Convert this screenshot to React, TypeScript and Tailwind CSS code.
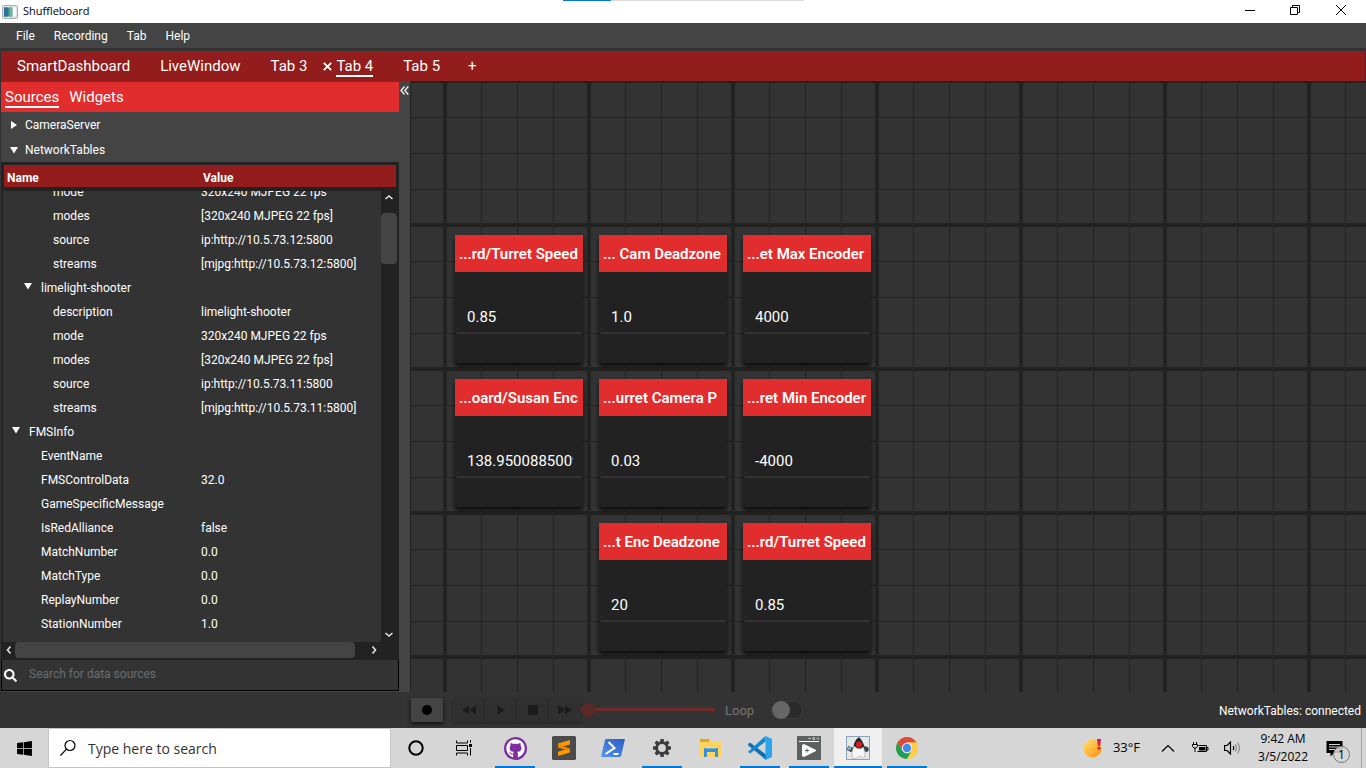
import React from "react";
import { FaGithub, FaWindows, FaSearch } from "react-icons/fa";

const menus = ["File", "Recording", "Tab", "Help"];

type Row = { name: string; value?: string; level: 0 | 1 | 2; open?: boolean };

const rows: Row[] = [
  { name: "mode", value: "320x240 MJPEG 22 fps", level: 2 },
  { name: "modes", value: "[320x240 MJPEG 22 fps]", level: 2 },
  { name: "source", value: "ip:http://10.5.73.12:5800", level: 2 },
  { name: "streams", value: "[mjpg:http://10.5.73.12:5800]", level: 2 },
  { name: "limelight-shooter", level: 1, open: true },
  { name: "description", value: "limelight-shooter", level: 2 },
  { name: "mode", value: "320x240 MJPEG 22 fps", level: 2 },
  { name: "modes", value: "[320x240 MJPEG 22 fps]", level: 2 },
  { name: "source", value: "ip:http://10.5.73.11:5800", level: 2 },
  { name: "streams", value: "[mjpg:http://10.5.73.11:5800]", level: 2 },
  { name: "FMSInfo", level: 0, open: true },
  { name: "EventName", level: 1 },
  { name: "FMSControlData", value: "32.0", level: 1 },
  { name: "GameSpecificMessage", level: 1 },
  { name: "IsRedAlliance", value: "false", level: 1 },
  { name: "MatchNumber", value: "0.0", level: 1 },
  { name: "MatchType", value: "0.0", level: 1 },
  { name: "ReplayNumber", value: "0.0", level: 1 },
  { name: "StationNumber", value: "1.0", level: 1 },
];

const indent = { 0: "pl-2", 1: "pl-5", 2: "pl-8" };

const tiles = [
  { title: "...rd/Turret Speed", value: "0.85", place: "col-start-1 row-start-1" },
  { title: "... Cam Deadzone", value: "1.0", place: "col-start-2 row-start-1" },
  { title: "...et Max Encoder", value: "4000", place: "col-start-3 row-start-1" },
  { title: "...oard/Susan Enc", value: "138.95008850097656", place: "col-start-1 row-start-2" },
  { title: "...urret Camera P", value: "0.03", place: "col-start-2 row-start-2" },
  { title: "...ret Min Encoder", value: "-4000", place: "col-start-3 row-start-2" },
  { title: "...t Enc Deadzone", value: "20", place: "col-start-2 row-start-3" },
  { title: "...rd/Turret Speed", value: "0.85", place: "col-start-3 row-start-3" },
];

function Triangle({ down }: { down?: boolean }) {
  return (
    <svg width="8" height="8" viewBox="0 0 8 8" fill="#fff" className="shrink-0" aria-hidden="true">
      <path d={down ? "M0 1h8L4 7.5z" : "M1 0v8l6-4z"} />
    </svg>
  );
}

function Chevron({ dir }: { dir: "up" | "down" | "left" | "right" }) {
  const d = {
    up: "M1.5 6 5 3l3.500 3",
    down: "M1.500 3 5 6l3.500-3",
    left: "M6.500 1.500 3.500 5l3 3.500",
    right: "M3.500 1.500 6.500 5l-3 3.500",
  }[dir];
  return (
    <svg width="10" height="10" viewBox="0 0 10 10" fill="none" stroke="#e4e4e4" strokeWidth="1.600" aria-hidden="true">
      <path d={d} />
    </svg>
  );
}

function TitleBar() {
  return (
    <header className="relative flex h-[23px] shrink-0 items-center bg-white pl-0.5 text-black">
      <svg width="16" height="14" viewBox="0 0 16 14" aria-hidden="true">
        <rect x=".5" y=".5" width="15" height="13" rx="1" fill="#dfe3e6" stroke="#a9adb1" />
        <rect x="2" y="2.500" width="8" height="9" fill="#3d8f97" />
        <rect x="2" y="2.500" width="4" height="9" fill="#2e6f9c" />
        <rect x="7.500" y="2.500" width="3" height="9" fill="#6cb89b" />
        <rect x="11" y="2.500" width="3" height="9" fill="#f7f9fa" />
      </svg>
      <span className="ml-[5px] font-['Open_Sans',sans-serif] text-[11px]">Shuffleboard</span>
      <div className="absolute left-[563px] top-0 h-px w-[241px] bg-[#dcdcdc]">
        <div className="h-px w-12 bg-[#0078d7]" />
      </div>
      <div className="ml-auto flex h-full">
        <button aria-label="Minimize" className="flex w-[45px] items-center justify-center pb-[3px]">
          <svg width="10" height="10" viewBox="0 0 10 10"><path d="M0 5.500h10" stroke="#000" /></svg>
        </button>
        <button aria-label="Restore" className="flex w-[46px] items-center justify-center pb-[3px]">
          <svg width="10" height="10" viewBox="0 0 10 10" fill="none" stroke="#000"><path d="M.5 2.500h7v7h-7zM2.500 2.500v-2h7v7h-2" /></svg>
        </button>
        <button aria-label="Close" className="mr-[2px] flex w-[46px] items-center justify-center pb-[3px]">
          <svg width="10" height="10" viewBox="0 0 10 10" stroke="#000"><path d="M0 0l10 10M10 0L0 10" /></svg>
        </button>
      </div>
    </header>
  );
}

function Sidebar() {
  return (
    <aside className="ml-px flex w-[398px] shrink-0 flex-col bg-[#444] pt-px">
      <div className="flex h-[30px] shrink-0 items-start gap-[10px] bg-[#e12d2d] pl-1 text-[15px]">
        <button className="border-b-2 border-white pt-[6px] leading-[18px]">Sources</button>
        <button className="pt-[6px] leading-[18px]">Widgets</button>
      </div>
      <button className="flex h-[25px] shrink-0 items-center gap-[7px] pl-[9px] text-xs">
        <Triangle />CameraServer
      </button>
      <button className="flex h-[25px] shrink-0 items-center gap-[7px] pl-[9px] text-xs">
        <Triangle down />NetworkTables
      </button>
      <div className="flex min-h-0 flex-1 flex-col bg-[#222] px-[2px] pt-[3px]">
        <div className="grid min-h-0 flex-1 grid-cols-[minmax(0,1fr)_16px] grid-rows-[26px_minmax(0,1fr)]">
          <table className="col-span-2 col-start-1 row-span-2 row-start-1 flex min-h-0 flex-col text-left text-xs">
            <thead className="mx-px block h-[22px] shrink-0 bg-[#931c1c]">
              <tr className="flex h-[22px] items-center pt-[3px]">
                <th className="w-[196px] pl-[3px] font-bold">Name</th>
                <th className="pl-[3px] font-bold">Value</th>
              </tr>
            </thead>
            <tbody className="mr-4 mt-1 flex min-h-0 flex-1 flex-col justify-end overflow-hidden bg-[#333] pb-[6px]">
              {rows.map((r, i) => (
                <tr key={i} className="flex h-6 shrink-0 items-center">
                  <td className={`flex w-[198px] items-center ${indent[r.level]}`}>
                    <span className="flex w-[18px] pb-1 pl-px">{r.open && <Triangle down />}</span>
                    {r.name}
                  </td>
                  <td>{r.value}</td>
                </tr>
              ))}
            </tbody>
          </table>
          <div className="col-start-2 row-start-2 flex flex-col items-center bg-[#222] py-[2px]">
            <Chevron dir="up" />
            <div className="mt-[10px] h-[51px] w-4 rounded bg-[#444]" />
            <div className="mt-auto"><Chevron dir="down" /></div>
          </div>
        </div>
        <div className="flex h-[18px] shrink-0 items-start">
          <div className="flex h-4 w-3 items-center pl-px"><Chevron dir="left" /></div>
          <div className="h-4 w-[340px] rounded bg-[#444]" />
          <div className="ml-[14px] flex h-4 items-center"><Chevron dir="right" /></div>
        </div>
      </div>
      <label className="mb-px flex h-[31px] shrink-0 items-center border border-t-0 border-black bg-[#333] pl-[2px]">
        <FaSearch className="size-[13px]" />
        <input
          aria-label="Search for data sources"
          placeholder="Search for data sources"
          className="ml-3 min-w-0 flex-1 bg-transparent pb-[3px] text-xs outline-none placeholder:text-[#696e73]"
        />
      </label>
    </aside>
  );
}

function Tile({ title, value, place }: { title: string; value: string; place: string }) {
  return (
    <section className={`flex flex-col rounded bg-[#222] shadow-[0_3px_4px_rgba(0,0,0,0.8)] ${place}`}>
      <h2 className="flex h-[37px] items-center whitespace-nowrap bg-[#e12d2d] pl-1 pt-px text-[15px] font-semibold">{title}</h2>
      <input
        aria-label={title}
        defaultValue={value}
        className="mx-[2px] mt-[29px] h-[33px] min-w-0 border-b-2 border-[#333] bg-transparent pl-[10px] pr-2 text-[15px] outline-none"
      />
    </section>
  );
}

function ControlIcon({ d }: { d: string }) {
  return (
    <svg width="14" height="12" viewBox="0 0 14 12" fill="#1c1c1c" aria-hidden="true"><path d={d} /></svg>
  );
}

function PlaybackBar() {
  const controls = [
    { label: "Rewind", d: "M7 1.500v9L0 6zM14 1.500v9L7 6z" },
    { label: "Play", d: "M3.500 1v10L11 6z" },
    { label: "Stop", d: "M2 1h10v10H2z" },
    { label: "Forward", d: "M0 1.500v9L7 6zM7 1.500v9L14 6z" },
  ];
  return (
    <footer className="flex h-9 shrink-0 items-center bg-[#333] pl-[411px] pr-[5px] text-xs">
      <button aria-label="Record" className="flex h-6 w-8 items-center justify-center rounded-[1px] bg-[#444] shadow-[0_2px_4px_rgba(0,0,0,0.7)]">
        <span className="size-[10px] rounded-full bg-black" />
      </button>
      <div className="ml-[10px] flex">
        {controls.map((c) => (
          <button key={c.label} aria-label={c.label} className="flex h-6 w-8 items-center justify-center bg-[#303030] shadow-[0_1px_3px_rgba(0,0,0,0.35)]">
            <ControlIcon d={c.d} />
          </button>
        ))}
      </div>
      <input
        type="range"
        aria-label="Playback position"
        defaultValue={0}
        className="h-[14px] w-[134px] appearance-none bg-[linear-gradient(#6f2a2a,#6f2a2a)] bg-[length:126px_3px] bg-[position:8px_5px] bg-no-repeat [&::-webkit-slider-thumb]:size-[14px] [&::-webkit-slider-thumb]:appearance-none [&::-webkit-slider-thumb]:rounded-full [&::-webkit-slider-thumb]:bg-[#5c2929]"
      />
      <label htmlFor="loop" className="ml-[10px] pt-px text-[13px] text-[#757575]">Loop</label>
      <input
        id="loop"
        type="checkbox"
        className="ml-[17px] h-[18px] w-8 appearance-none rounded-full border border-[#3b3b3b] bg-[#2b2b2b] before:block before:size-[18px] before:-translate-y-px before:rounded-full before:bg-[#666]"
      />
      <span className="ml-auto pt-px">NetworkTables: connected</span>
    </footer>
  );
}

function GithubIcon() {
  return (
    <span className="flex size-[23px] items-center justify-center rounded-full bg-[#7b2fa0]">
      <FaGithub className="size-[19px] text-white" />
    </span>
  );
}

function SublimeIcon() {
  return (
    <svg width="24" height="24" viewBox="0 0 24 24">
      <rect width="24" height="24" rx="1.500" fill="#4b4b4b" />
      <path d="M18 4v4.400l-7 2.200 7 2.200v3.800L6 20v-4.300l7-2.100-7-2.200V7.600z" fill="#ff9800" />
      <path d="M6 7.700v3.600l12 4.200v-2.900z" fill="#e08000" opacity=".55" />
    </svg>
  );
}

function PowerShellIcon() {
  return (
    <svg width="24" height="20" viewBox="0 0 24 20">
      <defs>
        <linearGradient id="ps" x1="0" y1="1" x2="1" y2="0">
          <stop stopColor="#5391ee" />
          <stop offset="1" stopColor="#2c5fc4" />
        </linearGradient>
      </defs>
      <path d="M5 1h18a.8.8 0 0 1 .8 1L20 18a1.300 1.300 0 0 1-1.200 1H1a.8.8 0 0 1-.8-1L4 2a1.300 1.300 0 0 1 1-1z" fill="url(#ps)" />
      <path d="M7.500 4l6 6-9 6M12.500 16h5" fill="none" stroke="#fff" strokeWidth="2" />
    </svg>
  );
}

function GearIcon() {
  const angles = [0, 45, 90, 135, 180, 225, 270, 315];
  return (
    <svg width="20" height="20" viewBox="0 0 20 20">
      {angles.map((a) => (
        <path key={a} d="M8 4 8.400 1h3.200L12 4z" fill="#3c3c3c" transform={`rotate(${a} 10 10)`} />
      ))}
      <circle cx="10" cy="10" r="5.300" fill="none" stroke="#3c3c3c" strokeWidth="2.800" />
    </svg>
  );
}

function FolderIcon() {
  return (
    <svg width="22" height="20" viewBox="0 0 22 20">
      <path d="M1 1h8l2 2H1z" fill="#dd9b0a" />
      <path d="M0 2h10l1 1h10v16H0z" fill="#ffd45e" />
      <path d="M0 1h9v3H0z" fill="#e3a413" />
      <path d="M4 10h14v9h-3v-5H7v5H4z" fill="#3b90d3" />
      <path d="M6 10h10v1H6z" fill="#6ab7ea" />
    </svg>
  );
}

function VsCodeIcon() {
  return (
    <svg width="24" height="24" viewBox="0 0 24 24">
      <path d="M0 8.300 2 6.500l16 12V24L.3 9.500z" fill="#0b70b8" />
      <path d="M0 15.700 17.500 0v5.500L2 17.500z" fill="#1686cf" />
      <path d="M17.500 0 23.200 2.500q.8.400.8 1.300v16.400q0 .9-.8 1.300L17.500 24z" fill="#2aa5ee" />
    </svg>
  );
}

function VideoIcon() {
  return (
    <svg width="24" height="24" viewBox="0 0 24 24">
      <rect width="24" height="24" fill="#5c605e" />
      <path d="M2 5.500h20" stroke="#fff" />
      <path d="M11 2.500h3M16 1.500h1.500v2H16zM20 1.500l2 2M22 1.500l-2 2" stroke="#ddd" strokeWidth=".8" fill="none" />
      <path d="M5 9v11l2 1 12-6v-1L7 8z" fill="#fff" />
      <path d="M8 14.500h4M10 12.500v4" stroke="#5c605e" />
    </svg>
  );
}

function DukeIcon() {
  return (
    <svg width="24" height="24" viewBox="0 0 24 24">
      <rect x=".5" y=".5" width="23" height="23" fill="#e4e8eb" stroke="#8da2b5" />
      <path d="M8 12 2 10l-1 4 4 2 3-1zM17 10l5 1 1 3-2 2-4-1z" fill="#3b4248" />
      <path d="M2 11h3v3H2z" fill="#7fb2d8" />
      <path d="M13 1c3 3 5 7 6 12l-6 2-6-2c1-6 2-9 6-12z" fill="#24282b" />
      <path d="M8 10q5 5 9.500 1 2 5 1.500 10-3 2-5-1-4 4-8 2Q5 16 8 10z" fill="#f7f7f7" stroke="#a0a0a0" strokeWidth=".6" />
      <circle cx="13" cy="8.500" r="3" fill="#e21b23" />
    </svg>
  );
}

function ChromeIcon() {
  return (
    <svg width="22" height="22" viewBox="0 0 22 22">
      <circle cx="11" cy="11" r="11" fill="#ffce44" />
      <path d="M1.500 5.500A11 11 0 0 1 20.500 5.500H11L6.200 13.800z" fill="#dc4a3e" />
      <path d="M1.500 5.500 6.200 13.800 15.800 13.800 11 22A11 11 0 0 1 1.500 5.500z" fill="#1a9f5d" />
      <path d="M11 5.500h9.500A11 11 0 0 1 11 22l4.800-8.200z" fill="#ffce44" />
      <circle cx="11" cy="11" r="5.200" fill="#f4f4f4" />
      <circle cx="11" cy="11" r="4.200" fill="#4688f1" />
    </svg>
  );
}

const apps: { name: string; icon: React.ReactNode; state: "idle" | "running" | "active" }[] = [
  { name: "GitHub Desktop", icon: <GithubIcon />, state: "running" },
  { name: "Sublime Text", icon: <SublimeIcon />, state: "idle" },
  { name: "PowerShell", icon: <PowerShellIcon />, state: "idle" },
  { name: "Settings", icon: <GearIcon />, state: "running" },
  { name: "File Explorer", icon: <FolderIcon />, state: "idle" },
  { name: "Visual Studio Code", icon: <VsCodeIcon />, state: "running" },
  { name: "Driver Station", icon: <VideoIcon />, state: "running" },
  { name: "Shuffleboard", icon: <DukeIcon />, state: "active" },
  { name: "Google Chrome", icon: <ChromeIcon />, state: "running" },
];

function Taskbar() {
  return (
    <nav className="flex h-10 shrink-0 bg-[#d6d6d6] font-['Noto_Sans',sans-serif] text-black">
      <button aria-label="Start" className="flex w-12 items-center justify-center">
        <FaWindows className="size-[17px]" />
      </button>
      <label className="flex w-[343px] items-center border border-[#c4c4c4] bg-white pl-[10px]">
        <svg width="18" height="18" viewBox="0 0 18 18" fill="none" stroke="#000" strokeWidth="1.200" aria-hidden="true">
          <circle cx="11" cy="6.500" r="5" />
          <path d="M7.500 10.200 1.500 16.500" />
        </svg>
        <input
          aria-label="Type here to search"
          placeholder="Type here to search"
          className="ml-[11px] min-w-0 flex-1 bg-transparent pt-px font-['Open_Sans',sans-serif] text-sm outline-none placeholder:text-[#333]"
        />
      </label>
      <button aria-label="Cortana" className="ml-px flex w-12 items-center justify-center">
        <svg width="16" height="16" viewBox="0 0 16 16"><circle cx="8" cy="8" r="6.700" fill="none" stroke="#000" strokeWidth="2" /></svg>
      </button>
      <button aria-label="Task View" className="flex w-12 items-center justify-center">
        <svg width="17" height="16" viewBox="0 0 17 16" fill="none" stroke="#000">
          <path d="M.5.500v2.500h11V.5M.5 15.500v-2.500h11v2.500M.5 5.500h11v5H.5zM14.500 0v2.500M14.500 8v7.500" />
          <path d="M13 4h3v3h-3z" fill="#000" stroke="none" />
        </svg>
      </button>
      <div className="ml-[3px] flex gap-px">
        {apps.map((a) => (
          <button
            key={a.name}
            aria-label={a.name}
            className={`flex w-12 flex-col items-center ${a.state === "active" ? "bg-[#efefef]" : ""}`}
          >
            <span className="flex flex-1 items-center pt-[2px]">{a.icon}</span>
            <span className={`h-[2px] ${a.state === "active" ? "w-12 bg-[#0078d7]" : a.state === "running" ? "w-10 bg-[#0078d7]" : "w-10"}`} />
          </button>
        ))}
      </div>
      <div className="ml-auto mr-1 flex items-center border-r border-[#a5a5a5] text-xs">
        <button className="flex items-center gap-[10px] font-['Open_Sans',sans-serif] text-[13px]">
          <svg width="20" height="20" viewBox="0 0 20 20" aria-hidden="true">
            <defs>
              <linearGradient id="sun" x1="0" y1="0" x2="1" y2="1">
                <stop stopColor="#ffe36a" />
                <stop offset="1" stopColor="#ff8d12" />
              </linearGradient>
            </defs>
            <circle cx="9.500" cy="10.500" r="9" fill="url(#sun)" />
            <path d="M14 1h4l-1 7h-2zM14.500 9h3v2.500h-3z" fill="#d81b43" />
          </svg>
          33°F
        </button>
        <button aria-label="Show hidden icons" className="ml-[21px]">
          <svg width="14" height="8" viewBox="0 0 14 8" fill="none" stroke="#000" strokeWidth="1.200"><path d="M1 7.500l6-6 6 6" /></svg>
        </button>
        <button aria-label="Battery" className="ml-[17px]">
          <svg width="17" height="14" viewBox="0 0 17 14" fill="none" stroke="#000">
            <path d="M6.500 4.500h8v6h-9M15 6.500h1v2.500h-1" />
            <path d="M7 6h6.500v3.500H7z" fill="#000" stroke="none" />
            <path d="M1.500 1v2M4.500 1v2M.5 3.500h5v2L4 7H2L.5 5.500zM3 7v4" />
          </svg>
        </button>
        <button aria-label="Volume" className="ml-[15px]">
          <svg width="17" height="14" viewBox="0 0 17 14" fill="none" stroke="#000" strokeWidth="1.200">
            <path d="M.6 4.500h2.500L6.500 1v12L3.100 9.500H.6zM9 5q1.500 2 0 4" />
            <path d="M11 3.500q3 3.500 0 7M13.500 1.500q4 5.500 0 11" stroke="#888" />
          </svg>
        </button>
        <button className="ml-[17px] font-['Open_Sans',sans-serif] leading-[18px]">
          <span className="block">9:42 AM</span>
          <span className="block">3/5/2022</span>
        </button>
        <button aria-label="1 new notification" className="relative ml-[18px] mr-[11px] flex h-10 w-6 items-center font-['Open_Sans',sans-serif]">
          <svg width="17" height="17" viewBox="0 0 17 17"><path d="M.5 1h16v12H8l-3.500 3.500V13h-4z" /><path d="M3 4.500h11M3 7h11M3 9.500h8" stroke="#d6d6d6" /></svg>
          <span className="absolute bottom-[5px] right-0 flex size-[17px] items-center justify-center rounded-full border border-[#777] bg-[#d6d6d6]/90 text-xs">1</span>
        </button>
      </div>
    </nav>
  );
}

export default function App() {
  return (
    <div className="flex h-screen flex-col overflow-hidden bg-[#333] font-['Roboto',sans-serif] text-white">
      <TitleBar />
      <div className="flex h-[25px] shrink-0 items-center gap-[19px] bg-[#444] pl-4 text-xs">
        {menus.map((m) => (
          <button key={m}>{m}</button>
        ))}
      </div>
      <div className="mx-px mt-[3px] flex h-[30px] shrink-0 items-start bg-[#931c1c] pl-4 pt-[6px] text-[15px] leading-[18px]">
        <button>SmartDashboard</button>
        <button className="ml-[30px]">LiveWindow</button>
        <button className="ml-[30px]">Tab 3</button>
        <button aria-label="Close Tab 4" className="ml-4 flex h-[18px] items-center">
          <svg width="9" height="9" viewBox="0 0 9 9" stroke="#fff" strokeWidth="1.800"><path d="M.8.800l7.400 7.400M8.200.800L.8 8.200" /></svg>
        </button>
        <button className="ml-1 border-b-2 border-white">Tab 4</button>
        <button className="ml-[30px]">Tab 5</button>
        <button className="ml-7" aria-label="Add tab">+</button>
      </div>
      <div className="flex min-h-0 flex-1">
        <Sidebar />
        <button aria-label="Collapse sidebar" className="flex w-[11px] shrink-0 items-start justify-center bg-[#444] pt-[5px]">
          <svg width="9" height="9" viewBox="0 0 9 9" fill="none" stroke="#fff" strokeWidth="1.200"><path d="M4.500.5l-3.500 4 3.500 4M8.300.5l-3.500 4 3.500 4" /></svg>
        </button>
        <main className="min-w-0 flex-1 border-l border-[#222] bg-[#333] bg-[linear-gradient(90deg,#222_4px,transparent_4px,transparent_38px,#222_38px,#222_39px,transparent_39px,transparent_74px,#222_74px,#222_75px,transparent_75px,transparent_110px,#222_110px,#222_111px,transparent_111px),linear-gradient(180deg,#222_4px,transparent_4px,transparent_38px,#222_38px,#222_39px,transparent_39px,transparent_74px,#222_74px,#222_75px,transparent_75px,transparent_110px,#222_110px,#222_111px,transparent_111px)] bg-[length:144px_144px] bg-[position:32px_-2px]">
          <div className="grid auto-rows-[128px] grid-cols-[repeat(3,128px)] gap-4 pl-11 pt-[154px]">
            {tiles.map((t, i) => (
              <Tile key={i} {...t} />
            ))}
          </div>
        </main>
      </div>
      <PlaybackBar />
      <Taskbar />
    </div>
  );
}
